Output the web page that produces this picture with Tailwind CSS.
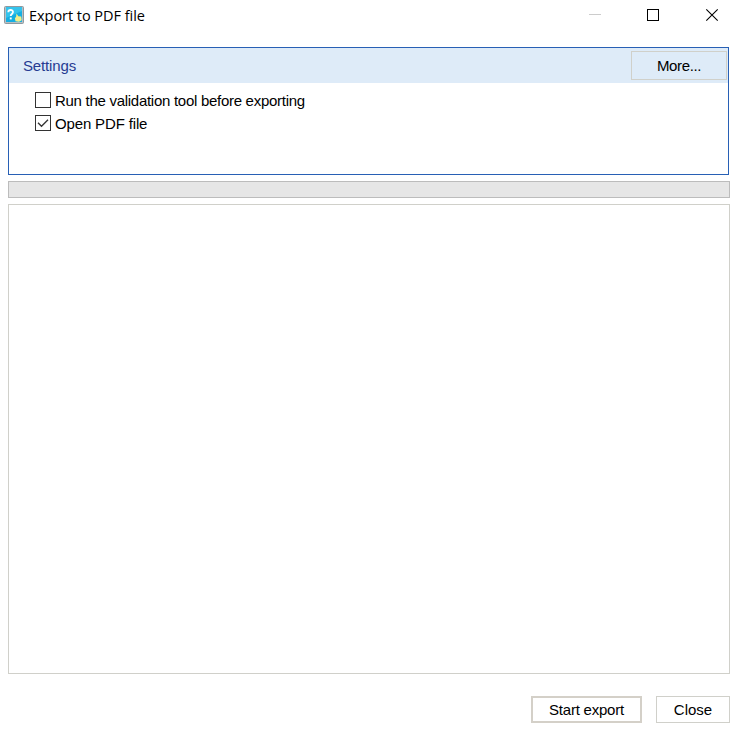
<!DOCTYPE html>
<html lang="en">
<head>
<meta charset="utf-8">
<title>Export to PDF file</title>
<script src="https://cdn.jsdelivr.net/npm/@tailwindcss/browser@4"></script>
</head>
<body class="bg-white">
<div class="flex h-[733px] w-[733px] flex-col overflow-hidden bg-white font-['Liberation_Sans',Arial,sans-serif] text-[15px] leading-[17px] text-black">
  <header class="flex h-[47px] shrink-0 items-start justify-between pl-1">
    <div class="flex items-start gap-[5px] pt-[5px]">
      <svg class="mt-px h-[18px] w-5" viewBox="0 0 20 18">
        <rect x=".5" y=".5" width="19" height="17" rx="1" fill="#b9bfc2" stroke="#8e999f"/>
        <rect x="2" y="1" width="16" height="15" fill="#16aee2"/>
        <path d="M2 1h16v4L2 12z" fill="#34c3ec"/>
        <path d="M4.300 6.200C4.300 3.300 9 3.300 9 6.100c0 2-2.300 1.900-2.300 4" fill="none" stroke="#fff" stroke-width="1.800"/>
        <rect x="5.800" y="11.500" width="1.900" height="1.900" fill="#fff"/>
        <path d="M12.500 7.500l1.800 2.700 2.900.3.500 3.800-2.700 1.500-3.500-.6-.6-2.900 1.200-1.500z" fill="#f3ed8a"/>
      </svg>
      <h1 class="font-['Open_Sans','Noto_Sans',sans-serif] text-[14.500px] leading-[21px] tracking-[-0.04px]">Export to PDF file</h1>
    </div>
    <svg class="h-[30px] w-[144px]" viewBox="0 0 144 30" fill="none">
      <path d="M0 14.500h12" stroke="#ccc"/>
      <rect x="58.500" y="9.500" width="11" height="11" stroke="#000"/>
      <path d="M117.300 9.300l11.400 11.400M128.700 9.300l-11.400 11.400" stroke="#000" stroke-width="1.100"/>
    </svg>
  </header>

  <main class="ml-2 flex w-[722px] flex-col">
    <section class="h-[128px] w-[721px] border border-[#2860b5]">
      <div class="flex h-[35px] items-center justify-between bg-[#deebf8] pr-px pl-[14px]">
        <h2 class="tracking-[-0.15px] text-[#263b92]">Settings</h2>
        <button class="h-[29px] w-24 border border-[#d0d0ca] tracking-[-0.35px]">More...</button>
      </div>
      <div class="flex flex-col gap-[7px] pt-[9px] pl-[26px]">
        <label class="flex h-4 items-center gap-1">
          <span class="size-4 border border-[#333] bg-white"></span>
          <span class="pt-px tracking-[-0.28px] whitespace-nowrap">Run the validation tool before exporting</span>
        </label>
        <label class="flex h-4 items-center gap-1">
          <span class="size-4 border border-[#333] bg-white">
            <svg class="size-[14px]" viewBox="0 0 14 14"><path d="M2 6.800l3.500 3.500L12 3.800" fill="none" stroke="#333" stroke-width="1.300"/></svg>
          </span>
          <span class="pt-px tracking-[-0.15px] whitespace-nowrap">Open PDF file</span>
        </label>
      </div>
    </section>
    <div class="mt-1.5 h-[17px] border border-[#bcbcbc] bg-[#e6e6e6]"></div>
    <div class="mt-1.5 h-[470px] border border-[#d0d0ca] bg-white"></div>
    <footer class="mt-[22px] flex justify-end gap-[14px]">
      <button class="h-[27px] w-[111px] border-2 border-[#d4d0c8] tracking-[-0.22px]">Start export</button>
      <button class="h-[27px] w-[74px] border border-[#d0d0ca]">Close</button>
    </footer>
  </main>
</div>
</body>
</html>
